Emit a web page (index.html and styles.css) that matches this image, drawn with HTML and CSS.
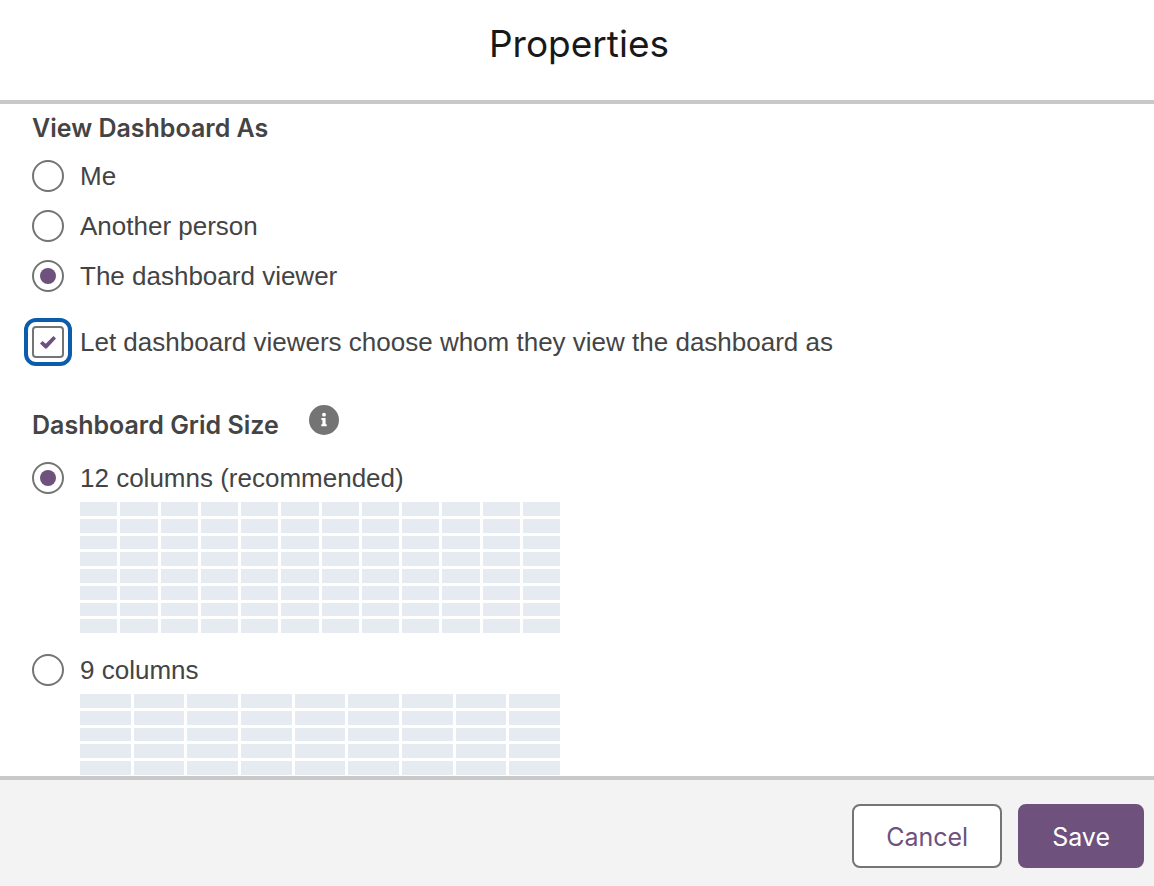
FILE: index.html
```html
<!DOCTYPE html>
<html lang="en">
<head>
  <meta charset="UTF-8" />
  <meta name="viewport" content="width=device-width, initial-scale=1.0"/>
  <title>Properties</title>
  <link rel="stylesheet" href="styles.css">
</head>
<body>

  <header class="modal-header">
    <h1>Properties</h1>
  </header>

  <main class="modal-body">
    <fieldset class="view-as">
      <legend>View Dashboard As</legend>
      <label class="option"><input type="radio" name="viewAs" value="me"/>Me</label>
      <label class="option"><input type="radio" name="viewAs" value="other"/>Another person</label>
      <label class="option"><input type="radio" name="viewAs" value="viewer" checked/>The dashboard viewer</label>
    </fieldset>

    <label class="option choose"><input type="checkbox" id="chooseViewer" checked/>Let dashboard viewers choose whom they view the dashboard as</label>

    <fieldset class="grid-size">
      <legend>
        Dashboard Grid Size
        <svg class="info" viewBox="0 0 30 30" role="img" aria-label="Info">
          <circle cx="15" cy="15" r="15" fill="#747474"/>
          <circle cx="15" cy="9.7" r="1.9" fill="#fff"/>
          <path d="M12.4 13h4.2v6.2h1.1v2h-5.4v-2h1.1v-4.2h-1z" fill="#fff"/>
        </svg>
      </legend>
      <label class="option"><input type="radio" name="gridSize" value="12" checked/>12 columns (recommended)</label>
      <div class="preview cols-12" data-cells="96"></div>
      <label class="option"><input type="radio" name="gridSize" value="9"/>9 columns</label>
      <div class="preview cols-9" data-cells="72"></div>
    </fieldset>
  </main>

  <footer class="modal-footer">
    <button type="button" class="btn">Cancel</button>
    <button type="button" class="btn btn-brand">Save</button>
  </footer>

  <script>
    document.querySelectorAll(".preview").forEach(p => {
      for (let i = 0; i < Number(p.dataset.cells); i++) p.appendChild(document.createElement("span"));
    });
    document.getElementById("chooseViewer").focus({ preventScroll: true });
  </script>
</body>
</html>
```

FILE: styles.css
```css
/* ===== Base ===== */
* { margin:0; padding:0; box-sizing:border-box; }
body {
  height:100vh; display:flex; flex-direction:column;
  font-family:"Liberation Sans", Arial, sans-serif;
  font-size:26px; color:#444; background:#fff;
}

/* ===== Header ===== */
.modal-header {
  padding:20px 16px 32px 20px; text-align:center;
  border-bottom:4px solid #c9c9c9;
}
.modal-header h1 {
  font-family:Inter, sans-serif; font-size:37px; line-height:48px;
  font-weight:400; color:#181818;
}

/* ===== Body ===== */
.modal-body {
  flex:1; min-height:0; padding:8px 32px;
  overflow-y:auto; scrollbar-width:none;
}
fieldset { border:none; min-width:0; }
legend {
  display:flex; align-items:center; height:32px;
  font-family:Inter, sans-serif; font-size:25px; line-height:32px;
  font-weight:600;
}
.option { display:flex; align-items:center; gap:16px; line-height:32px; }

.view-as legend { margin-bottom:16px; }
.view-as .option + .option { margin-top:18px; }
.choose { margin-top:34px; }

.grid-size { margin-top:51px; }
.grid-size legend { margin-bottom:21px; }
.info { width:30px; height:30px; margin:0 0 10px 30px; }

/* ===== Radio and checkbox ===== */
input {
  appearance:none; flex:none; display:grid; place-items:center;
  width:32px; height:32px; background:#fff;
  border:2px solid #747474; cursor:pointer;
}
input[type="radio"] { border-radius:50%; }
input[type="radio"]:checked::before {
  content:""; width:16px; height:16px;
  border-radius:50%; background:#6e517d;
}
input[type="checkbox"] { border-radius:4px; }
input[type="checkbox"]:checked::before {
  content:""; width:16px; height:14px; background:#6e517d;
  clip-path:polygon(0 60%, 16% 42%, 36% 62%, 84% 8%, 100% 25%, 42% 96%, 32% 96%);
}
input[type="checkbox"]:focus {
  outline:4px solid #0b5cab; outline-offset:4px;
}

/* ===== Grid previews ===== */
.preview {
  display:grid; gap:3px; grid-template-rows:repeat(8, 1fr);
  max-width:480px; height:131px; margin:8px 0 21px 48px;
}
.preview span { background:#e6ebf2; }
.cols-12 { grid-template-columns:repeat(12, 1fr); }
.cols-9 { grid-template-columns:repeat(9, 1fr); }

/* ===== Footer ===== */
.modal-footer {
  display:flex; justify-content:flex-end; gap:16px;
  padding:24px 10px 18px;
  background:#f3f3f3; border-top:4px solid #c9c9c9;
}
.btn {
  height:64px; padding:2px 32px 0;
  font-family:Inter, sans-serif; font-size:25px; font-weight:400;
  color:#6e517d; background:#fff;
  border:2px solid #747474; border-radius:8px; cursor:pointer;
}
.btn-brand { color:#fff; background:#6e517d; border-color:#6e517d; }
```
